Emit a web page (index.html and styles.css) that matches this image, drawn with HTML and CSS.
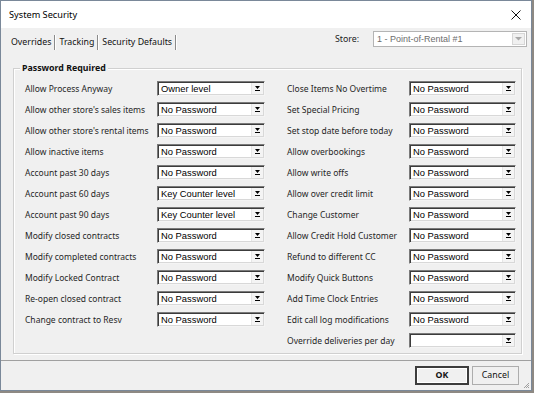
FILE: index.html
```html
<!DOCTYPE html>
<html>
<head>
<meta charset="utf-8">
<link rel="stylesheet" href="styles.css">
</head>
<body>
<div class="window">
  <div class="titlebar">
    <span class="title">System Security</span>
    <svg class="close" width="10" height="10" viewBox="0 0 10 10"><path d="M0.5 0.5 L9.5 9.5 M9.5 0.5 L0.5 9.5" stroke="#111" stroke-width="1" fill="none"/></svg>
  </div>
  <div class="content">
    <div class="tabrow">
      <div class="tabs">
        <span class="tab active">Overrides</span>
        <span class="tab">Tracking</span>
        <span class="tab">Security Defaults</span>
      </div>
      <div class="store">
        <span class="store-label">Store:</span>
        <div class="combo combo-disabled">
          <span class="combo-text">1 - Point-of-Rental #1</span>
          <span class="combo-btn"><svg width="7" height="4" viewBox="0 0 7 4"><path d="M0 0 H7 L3.5 3.5 Z" fill="#a8a8a8"/></svg></span>
        </div>
      </div>
    </div>
    <div class="tabpage">
      <div class="group">
        <span class="legend">Password Required</span>
        <div class="cols">
          <div class="col col-left">
            <span class="label">Allow Process Anyway</span>
            <div class="combo"><span class="combo-text">Owner level</span><span class="combo-btn"><svg width="5" height="5" viewBox="0 0 5 5"><path d="M0 0 H5 L2.5 3 Z M0 4 H5 V5 H0 Z" fill="#000"/></svg></span></div>
            <span class="label">Allow other store's sales items</span>
            <div class="combo"><span class="combo-text">No Password</span><span class="combo-btn"><svg width="5" height="5" viewBox="0 0 5 5"><path d="M0 0 H5 L2.5 3 Z M0 4 H5 V5 H0 Z" fill="#000"/></svg></span></div>
            <span class="label">Allow other store's rental items</span>
            <div class="combo"><span class="combo-text">No Password</span><span class="combo-btn"><svg width="5" height="5" viewBox="0 0 5 5"><path d="M0 0 H5 L2.5 3 Z M0 4 H5 V5 H0 Z" fill="#000"/></svg></span></div>
            <span class="label">Allow inactive items</span>
            <div class="combo"><span class="combo-text">No Password</span><span class="combo-btn"><svg width="5" height="5" viewBox="0 0 5 5"><path d="M0 0 H5 L2.5 3 Z M0 4 H5 V5 H0 Z" fill="#000"/></svg></span></div>
            <span class="label">Account past 30 days</span>
            <div class="combo"><span class="combo-text">No Password</span><span class="combo-btn"><svg width="5" height="5" viewBox="0 0 5 5"><path d="M0 0 H5 L2.5 3 Z M0 4 H5 V5 H0 Z" fill="#000"/></svg></span></div>
            <span class="label">Account past 60 days</span>
            <div class="combo"><span class="combo-text">Key Counter level</span><span class="combo-btn"><svg width="5" height="5" viewBox="0 0 5 5"><path d="M0 0 H5 L2.5 3 Z M0 4 H5 V5 H0 Z" fill="#000"/></svg></span></div>
            <span class="label">Account past 90 days</span>
            <div class="combo"><span class="combo-text">Key Counter level</span><span class="combo-btn"><svg width="5" height="5" viewBox="0 0 5 5"><path d="M0 0 H5 L2.5 3 Z M0 4 H5 V5 H0 Z" fill="#000"/></svg></span></div>
            <span class="label">Modify closed contracts</span>
            <div class="combo"><span class="combo-text">No Password</span><span class="combo-btn"><svg width="5" height="5" viewBox="0 0 5 5"><path d="M0 0 H5 L2.5 3 Z M0 4 H5 V5 H0 Z" fill="#000"/></svg></span></div>
            <span class="label">Modify completed contracts</span>
            <div class="combo"><span class="combo-text">No Password</span><span class="combo-btn"><svg width="5" height="5" viewBox="0 0 5 5"><path d="M0 0 H5 L2.5 3 Z M0 4 H5 V5 H0 Z" fill="#000"/></svg></span></div>
            <span class="label">Modify Locked Contract</span>
            <div class="combo"><span class="combo-text">No Password</span><span class="combo-btn"><svg width="5" height="5" viewBox="0 0 5 5"><path d="M0 0 H5 L2.5 3 Z M0 4 H5 V5 H0 Z" fill="#000"/></svg></span></div>
            <span class="label">Re-open closed contract</span>
            <div class="combo"><span class="combo-text">No Password</span><span class="combo-btn"><svg width="5" height="5" viewBox="0 0 5 5"><path d="M0 0 H5 L2.5 3 Z M0 4 H5 V5 H0 Z" fill="#000"/></svg></span></div>
            <span class="label">Change contract to Resv</span>
            <div class="combo"><span class="combo-text">No Password</span><span class="combo-btn"><svg width="5" height="5" viewBox="0 0 5 5"><path d="M0 0 H5 L2.5 3 Z M0 4 H5 V5 H0 Z" fill="#000"/></svg></span></div>
          </div>
          <div class="col col-right">
            <span class="label">Close Items No Overtime</span>
            <div class="combo"><span class="combo-text">No Password</span><span class="combo-btn"><svg width="5" height="5" viewBox="0 0 5 5"><path d="M0 0 H5 L2.5 3 Z M0 4 H5 V5 H0 Z" fill="#000"/></svg></span></div>
            <span class="label">Set Special Pricing</span>
            <div class="combo"><span class="combo-text">No Password</span><span class="combo-btn"><svg width="5" height="5" viewBox="0 0 5 5"><path d="M0 0 H5 L2.5 3 Z M0 4 H5 V5 H0 Z" fill="#000"/></svg></span></div>
            <span class="label">Set stop date before today</span>
            <div class="combo"><span class="combo-text">No Password</span><span class="combo-btn"><svg width="5" height="5" viewBox="0 0 5 5"><path d="M0 0 H5 L2.5 3 Z M0 4 H5 V5 H0 Z" fill="#000"/></svg></span></div>
            <span class="label">Allow overbookings</span>
            <div class="combo"><span class="combo-text">No Password</span><span class="combo-btn"><svg width="5" height="5" viewBox="0 0 5 5"><path d="M0 0 H5 L2.5 3 Z M0 4 H5 V5 H0 Z" fill="#000"/></svg></span></div>
            <span class="label">Allow write offs</span>
            <div class="combo"><span class="combo-text">No Password</span><span class="combo-btn"><svg width="5" height="5" viewBox="0 0 5 5"><path d="M0 0 H5 L2.5 3 Z M0 4 H5 V5 H0 Z" fill="#000"/></svg></span></div>
            <span class="label">Allow over credit limit</span>
            <div class="combo"><span class="combo-text">No Password</span><span class="combo-btn"><svg width="5" height="5" viewBox="0 0 5 5"><path d="M0 0 H5 L2.5 3 Z M0 4 H5 V5 H0 Z" fill="#000"/></svg></span></div>
            <span class="label">Change Customer</span>
            <div class="combo"><span class="combo-text">No Password</span><span class="combo-btn"><svg width="5" height="5" viewBox="0 0 5 5"><path d="M0 0 H5 L2.5 3 Z M0 4 H5 V5 H0 Z" fill="#000"/></svg></span></div>
            <span class="label">Allow Credit Hold Customer</span>
            <div class="combo"><span class="combo-text">No Password</span><span class="combo-btn"><svg width="5" height="5" viewBox="0 0 5 5"><path d="M0 0 H5 L2.5 3 Z M0 4 H5 V5 H0 Z" fill="#000"/></svg></span></div>
            <span class="label">Refund to different CC</span>
            <div class="combo"><span class="combo-text">No Password</span><span class="combo-btn"><svg width="5" height="5" viewBox="0 0 5 5"><path d="M0 0 H5 L2.5 3 Z M0 4 H5 V5 H0 Z" fill="#000"/></svg></span></div>
            <span class="label">Modify Quick Buttons</span>
            <div class="combo"><span class="combo-text">No Password</span><span class="combo-btn"><svg width="5" height="5" viewBox="0 0 5 5"><path d="M0 0 H5 L2.5 3 Z M0 4 H5 V5 H0 Z" fill="#000"/></svg></span></div>
            <span class="label">Add Time Clock Entries</span>
            <div class="combo"><span class="combo-text">No Password</span><span class="combo-btn"><svg width="5" height="5" viewBox="0 0 5 5"><path d="M0 0 H5 L2.5 3 Z M0 4 H5 V5 H0 Z" fill="#000"/></svg></span></div>
            <span class="label">Edit call log modifications</span>
            <div class="combo"><span class="combo-text">No Password</span><span class="combo-btn"><svg width="5" height="5" viewBox="0 0 5 5"><path d="M0 0 H5 L2.5 3 Z M0 4 H5 V5 H0 Z" fill="#000"/></svg></span></div>
            <span class="label">Override deliveries per day</span>
            <div class="combo"><span class="combo-text"></span><span class="combo-btn"><svg width="5" height="5" viewBox="0 0 5 5"><path d="M0 0 H5 L2.5 3 Z M0 4 H5 V5 H0 Z" fill="#000"/></svg></span></div>
          </div>
        </div>
      </div>
    </div>
    <div class="footer">
      <button class="btn btn-default">OK</button>
      <button class="btn">Cancel</button>
      <svg class="grip" width="7" height="7" viewBox="0 0 7 7"><path d="M6 1 L1 6 M6 3 L3 6 M6 5 L5 6" stroke="#a0a0a0" stroke-width="1" fill="none"/></svg>
    </div>
  </div>
</div>
</body>
</html>
```
FILE: styles.css
```css
html, body {
  margin: 0;
  padding: 0;
}
body {
  background: #8e8983;
  font-family: "Noto Sans", "Open Sans", sans-serif;
  width: 534px;
  height: 393px;
  overflow: hidden;
}
.window {
  width: 530px;
  height: 389px;
  border: 1px solid #7a8899;
  background: #f0f0f0;
  display: flex;
  flex-direction: column;
}
.titlebar {
  height: 27px;
  background: #fff;
  display: flex;
  align-items: center;
  justify-content: space-between;
  padding: 0 9px 0 8px;
  flex: none;
}
.title {
  font-size: 9.2px;
  color: #000;
  line-height: 12px;
}
.close {
  display: block;
  margin-right: 1px;
}
.content {
  flex: 1;
  display: flex;
  flex-direction: column;
}
.tabrow {
  height: 24px;
  display: flex;
  justify-content: space-between;
  align-items: flex-start;
  flex: none;
}
.tabs {
  display: flex;
  margin-top: 7px;
  margin-left: 6px;
}
.tab {
  font-size: 8.8px;
  line-height: 15px;
  height: 15px;
  padding: 0 3px;
  color: #111;
  border-left: 1px solid #fff;
  border-right: 1px solid #8a8a8a;
  box-shadow: 1px 0 0 #ffffff;
}
.tab.active {
  border-left-color: #f0f0f0;
}
.store {
  display: flex;
  align-items: center;
  margin-top: 3px;
  margin-right: 4px;
}
.store-label {
  font-size: 8.8px;
  color: #222;
  margin-right: 14px;
}
.combo {
  height: 15px;
  box-sizing: border-box;
  background: #fff;
  display: flex;
  align-items: stretch;
  border-style: solid;
  border-width: 1px;
  border-color: #7a7a7a #f4f4f4 #f4f4f4 #7a7a7a;
  box-shadow: inset 1px 1px 0 #3c3c3c, inset -1px -1px 0 #d8d8d8;
}
.combo-text {
  flex: 1;
  font-family: "Liberation Sans", Arial, sans-serif;
  font-size: 9.4px;
  line-height: 13px;
  padding-left: 3px;
  color: #000;
  white-space: nowrap;
  overflow: hidden;
}
.combo-btn {
  width: 11px;
  margin: 1px 1px 1px 0;
  background: #f4f4f4;
  display: flex;
  align-items: center;
  justify-content: center;
  border-left: 1px solid #e6e6e6;
}
.combo-disabled {
  width: 154px;
  height: 16px;
  border: 1px solid #b4b4b4;
  box-shadow: none;
}
.combo-disabled .combo-text {
  color: #6d6d6d;
  font-size: 9px;
  line-height: 14px;
}
.combo-disabled .combo-btn {
  margin: 1px;
  width: 11px;
  border: 1px solid #d6d6d6;
  background: #f0f0f0;
}
.tabpage {
  flex: none;
  height: 309px;
  box-sizing: border-box;
  padding: 16px 9px 0 12px;
  border-bottom: 1px solid #a0a0a0;
}
.group {
  position: relative;
  border: 1px solid #d0d0d0;
  box-shadow: inset 1px 1px 0 #fff, 1px 1px 0 #fff;
  padding: 9px 5px 2px 11px;
}
.legend {
  position: absolute;
  top: -7px;
  left: 6px;
  padding: 0 2px;
  background: #f0f0f0;
  font-size: 8.8px;
  font-weight: bold;
  line-height: 12px;
  color: #111;
}
.cols {
  display: flex;
  gap: 22px;
  align-items: flex-start;
}
.col {
  display: grid;
  grid-auto-rows: 21px;
  align-items: center;
}
.col-left {
  grid-template-columns: 132px 108px;
}
.col-right {
  grid-template-columns: 122px 107px;
}
.label {
  font-size: 8.5px;
  color: #262626;
  white-space: nowrap;
  line-height: 12px;
}
.footer {
  flex: 1;
  display: flex;
  justify-content: flex-end;
  align-items: flex-start;
  padding-top: 5px;
  padding-right: 2px;
  position: relative;
}
.btn {
  height: 19px;
  box-sizing: border-box;
  font-family: "Noto Sans", sans-serif;
  font-size: 8.8px;
  color: #111;
  background: #f0f0f0;
  border: 1px solid #adadad;
  padding: 0;
  margin-left: 3px;
  width: 47px;
  line-height: 15px;
}
.btn-default {
  width: 54px;
  border: 2px solid #3c3c3c;
  font-weight: bold;
  box-shadow: inset 0 0 0 1px #fff;
}
.btn + .btn {
  margin-right: 10px;
}
.grip {
  position: absolute;
  right: 1px;
  bottom: 1px;
}
```
